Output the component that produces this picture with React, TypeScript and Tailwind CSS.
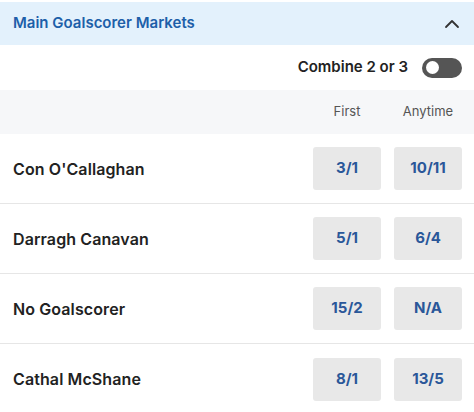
import React from "react";

const rows = [
  { name: "Con O'Callaghan", first: "3/1", any: "10/11" },
  { name: "Darragh Canavan", first: "5/1", any: "6/4" },
  { name: "No Goalscorer", first: "15/2", any: "N/A" },
  { name: "Cathal McShane", first: "8/1", any: "13/5" },
];

export default function App() {
  return (
    <div
      className="w-[474px] h-[412px] bg-white overflow-hidden pt-[2px]"
      style={{ fontFamily: "Inter, 'Noto Sans', sans-serif" }}
    >
      <div className="h-[43px] bg-[#e3f1fc] flex items-center justify-between pl-[13px] pr-[14px]">
        <span className="text-[15px] font-semibold text-[#1d5fa9]">Main Goalscorer Markets</span>
        <svg width="16" height="10" viewBox="0 0 16 10" fill="none">
          <path d="M2 8 L8 2 L14 8" stroke="#333" strokeWidth="1.8" strokeLinecap="round" strokeLinejoin="round" />
        </svg>
      </div>
      <div className="h-[45px] flex items-center justify-end pr-[12px] gap-[14px]">
        <span className="text-[15px] font-semibold text-[#222]">Combine 2 or 3</span>
        <div className="w-[40px] h-[20px] rounded-full bg-[#555] flex items-center pl-[4px]">
          <div className="w-[13px] h-[13px] rounded-full bg-white" />
        </div>
      </div>
      <div className="h-[44px] bg-[#f6f7f9] flex items-center justify-end pr-[12px] gap-[13px]">
        <div className="w-[68px] text-center text-[13px] text-[#555]">First</div>
        <div className="w-[68px] text-center text-[13px] text-[#555]">Anytime</div>
      </div>
      {rows.map((r, i) => (
        <div
          key={r.name}
          className={`h-[70px] flex items-center justify-between pl-[13px] pr-[12px] ${
            i < rows.length - 1 ? "border-b border-[#e6e6e6]" : ""
          }`}
        >
          <span className="text-[16px] font-semibold text-[#222] tracking-[0.1px]">{r.name}</span>
          <div className="flex gap-[13px]">
            <div className="w-[68px] h-[43px] rounded-[3px] bg-[#e8e8e8] flex items-center justify-center text-[15px] font-bold text-[#2a5799]">
              {r.first}
            </div>
            <div className="w-[68px] h-[43px] rounded-[3px] bg-[#e8e8e8] flex items-center justify-center text-[15px] font-bold text-[#2a5799]">
              {r.any}
            </div>
          </div>
        </div>
      ))}
    </div>
  );
}
